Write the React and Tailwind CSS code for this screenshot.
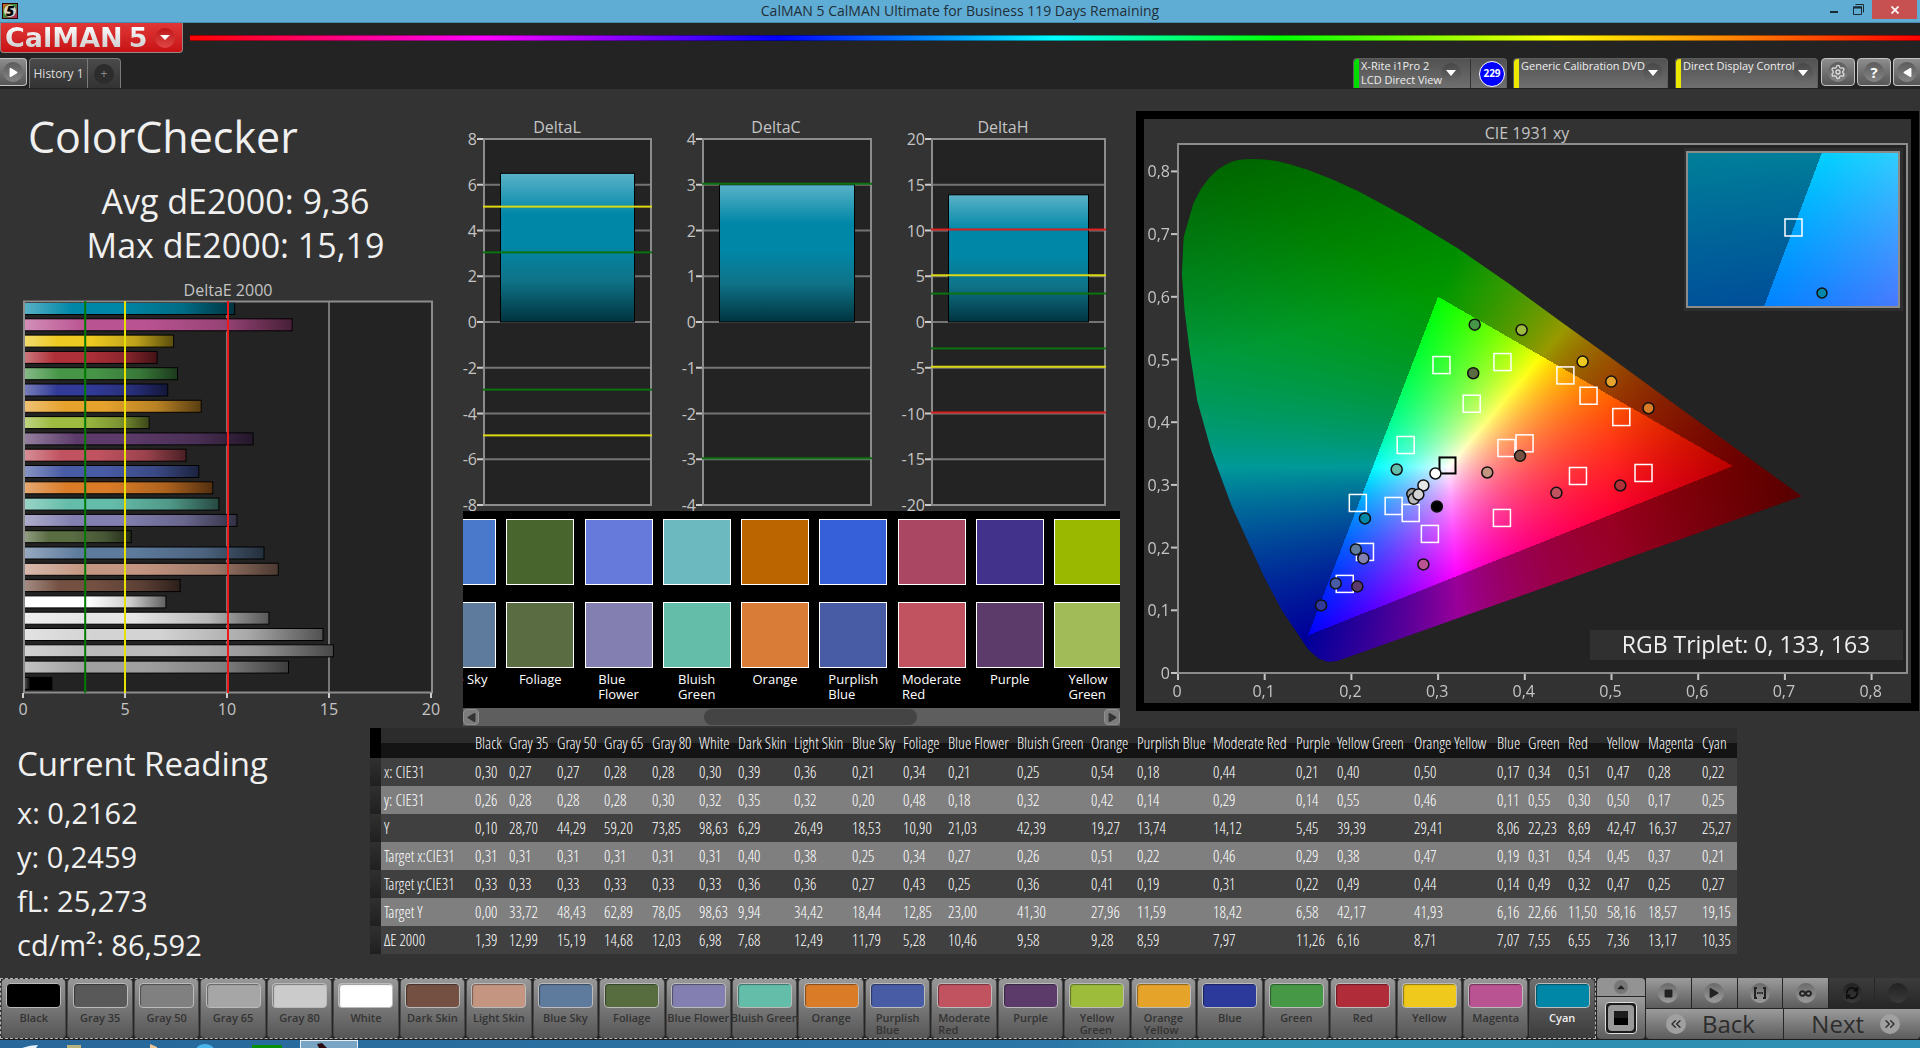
import React, { useEffect, useRef } from "react";
import clsx from "clsx";
import { FaPlay, FaStop, FaCaretUp, FaInfinity } from "react-icons/fa";
import { Settings, RefreshCw, ChevronsLeft, ChevronsRight } from "lucide-react";

// row: x, y, Y, target x, target y, target Y, dE2000
const PATCHES = [
  { name: "Black", color: "#000000", button: "#000000", col: "w-[34px]", row: ["0,30", "0,26", "0,10", "0,31", "0,33", "0,00", "1,39"] },
  { name: "Gray 35", color: "#a0a0a0", button: "#595959", col: "w-[48px]", row: ["0,27", "0,28", "28,70", "0,31", "0,33", "33,72", "12,99"] },
  { name: "Gray 50", color: "#bbbbbb", button: "#808080", col: "w-[47px]", row: ["0,27", "0,28", "44,29", "0,31", "0,33", "48,43", "15,19"] },
  { name: "Gray 65", color: "#d3d3d3", button: "#a6a6a6", col: "w-[48px]", row: ["0,28", "0,28", "59,20", "0,31", "0,33", "62,89", "14,68"] },
  { name: "Gray 80", color: "#e6e6e6", button: "#cbcbcb", col: "w-[47px]", row: ["0,28", "0,30", "73,85", "0,31", "0,33", "78,05", "12,03"] },
  { name: "White", color: "#ffffff", button: "#ffffff", col: "w-[39px]", row: ["0,30", "0,32", "98,63", "0,31", "0,33", "98,63", "6,98"] },
  { name: "Dark Skin", color: "#735042", button: "#735042", col: "w-[56px]", row: ["0,39", "0,35", "6,29", "0,40", "0,36", "9,94", "7,68"] },
  { name: "Light Skin", color: "#c49682", button: "#c49682", col: "w-[58px]", row: ["0,36", "0,32", "26,49", "0,38", "0,36", "34,42", "12,49"] },
  { name: "Blue Sky", color: "#5e7b9d", button: "#5e7b9d", target: "#4a79cb", col: "w-[51px]", row: ["0,21", "0,20", "18,53", "0,25", "0,27", "18,44", "11,79"] },
  { name: "Foliage", color: "#596c42", button: "#576c3f", target: "#48652e", col: "w-[45px]", row: ["0,34", "0,48", "10,90", "0,34", "0,43", "12,85", "5,28"] },
  { name: "Blue Flower", color: "#8380b1", button: "#8380b1", target: "#667adb", col: "w-[69px]", stack: true, row: ["0,21", "0,18", "21,03", "0,27", "0,25", "23,00", "10,46"] },
  { name: "Bluish Green", color: "#64bda9", button: "#64bda9", target: "#6cbabf", col: "w-[74px]", stack: true, row: ["0,25", "0,32", "42,39", "0,26", "0,36", "41,30", "9,58"] },
  { name: "Orange", color: "#d97b27", button: "#d97b27", swatch: "#d87c37", target: "#bb6500", col: "w-[46px]", row: ["0,54", "0,42", "19,27", "0,51", "0,41", "27,96", "9,28"] },
  { name: "Purplish Blue", color: "#485ba5", button: "#485ba5", target: "#365fda", col: "w-[76px]", stack: true, wrap: true, row: ["0,18", "0,14", "13,74", "0,22", "0,19", "11,59", "8,59"] },
  { name: "Moderate Red", color: "#c15360", button: "#c15360", target: "#aa4762", col: "w-[83px]", stack: true, wrap: true, row: ["0,44", "0,29", "14,12", "0,46", "0,31", "18,42", "7,97"] },
  { name: "Purple", color: "#5c3b6a", button: "#5c3b6a", target: "#42328b", col: "w-[41px]", row: ["0,21", "0,14", "5,45", "0,29", "0,22", "6,58", "11,26"] },
  { name: "Yellow Green", color: "#9ebc40", button: "#9ebc3b", swatch: "#a1bb58", target: "#9bb800", col: "w-[77px]", stack: true, wrap: true, row: ["0,40", "0,55", "39,39", "0,38", "0,49", "42,17", "6,16"] },
  { name: "Orange Yellow", color: "#e6a22d", button: "#e6a329", col: "w-[83px]", wrap: true, row: ["0,50", "0,46", "29,41", "0,47", "0,44", "41,93", "8,71"] },
  { name: "Blue", color: "#313b97", button: "#2b3a9b", col: "w-[31px]", row: ["0,17", "0,11", "8,06", "0,19", "0,14", "6,16", "7,07"] },
  { name: "Green", color: "#479648", button: "#469746", col: "w-[40px]", row: ["0,34", "0,55", "22,23", "0,31", "0,49", "22,66", "7,55"] },
  { name: "Red", color: "#b03039", button: "#b02c38", col: "w-[39px]", row: ["0,51", "0,30", "8,69", "0,54", "0,32", "11,50", "6,55"] },
  { name: "Yellow", color: "#edc921", button: "#efc91b", col: "w-[41px]", row: ["0,47", "0,50", "42,47", "0,45", "0,47", "58,16", "7,36"] },
  { name: "Magenta", color: "#ba5392", button: "#ba5392", col: "w-[54px]", row: ["0,28", "0,17", "16,37", "0,37", "0,25", "18,57", "13,17"] },
  { name: "Cyan", color: "#0087a7", button: "#0087a7", col: "w-[38px]", row: ["0,22", "0,25", "25,27", "0,21", "0,27", "19,15", "10,35"] },
];

const ROW_LABELS = ["x: CIE31", "y: CIE31", "Y", "Target x:CIE31", "Target y:CIE31", "Target Y", "ΔE 2000"];

const TARGETS = [
  [0.3045, 0.4919], [0.3748, 0.4967], [0.4474, 0.4754], [0.4741, 0.443], [0.3393, 0.4303],
  [0.5119, 0.409], [0.2632, 0.3644], [0.3794, 0.3596], [0.4003, 0.3671], [0.4619, 0.315],
  [0.5375, 0.3198], [0.208, 0.272], [0.2493, 0.2672], [0.269, 0.256], [0.2911, 0.2226],
  [0.3742, 0.2481], [0.2162, 0.1939], [0.1929, 0.1429],
];

const READINGS = [
  [0.3428, 0.5572, "#479648"], [0.3969, 0.5487, "#9ebc40"], [0.4672, 0.4983, "#edc921"],
  [0.5003, 0.4664, "#e6a22d"], [0.3411, 0.4797, "#596c42"], [0.5433, 0.4239, "#d97b27"],
  [0.2528, 0.3262, "#64bda9"], [0.2975, 0.3198, "#ffffff"], [0.3573, 0.3214, "#c49682"],
  [0.3951, 0.3479, "#735042"], [0.2836, 0.3007, "#e6e6e6"], [0.2708, 0.2869, "#a0a0a0"],
  [0.2725, 0.2794, "#bbbbbb"], [0.2778, 0.2863, "#d3d3d3"], [0.2992, 0.2672, "#000000"],
  [0.437, 0.289, "#c15360"], [0.5107, 0.3007, "#b03039"], [0.2162, 0.2481, "#0087a7"],
  [0.2057, 0.1987, "#5e7b9d"], [0.2144, 0.1843, "#8380b1"], [0.2836, 0.1748, "#ba5392"],
  [0.1825, 0.1445, "#485ba5"], [0.2074, 0.1397, "#5c3b6a"], [0.1656, 0.1094, "#313b97"],
];

const LOCUS = [
  [0.1836, 0.0191], [0.173, 0.0175], [0.162, 0.023], [0.15, 0.038], [0.1197, 0.0999], [0.0994, 0.153],
  [0.0616, 0.267], [0.0383, 0.355], [0.0221, 0.4345], [0.0139, 0.509], [0.0076, 0.578],
  [0.0045, 0.636], [0.0065, 0.695], [0.0175, 0.748], [0.026, 0.771], [0.036, 0.79], [0.046, 0.803],
  [0.0558, 0.8115], [0.063, 0.8158], [0.0703, 0.8187], [0.0848, 0.8199], [0.1, 0.819],
  [0.1139, 0.8165], [0.13, 0.811], [0.1487, 0.803], [0.177, 0.788], [0.2069, 0.769],
  [0.265, 0.726], [0.323, 0.677], [0.381, 0.6215], [0.439, 0.563], [0.4974, 0.5046],
  [0.5828, 0.4186], [0.7195, 0.282],
];

const PANEL_GRADIENT = "bg-linear-to-b from-[#9c9c9c] to-[#5c5c5c]";

function toNumber(text) {
  return parseFloat(text.replace(",", "."));
}

function insideGamut(x, y) {
  const side = (ax, ay, bx, by) => (bx - ax) * (y - ay) - (by - ay) * (x - ax);
  return (
    side(0.15, 0.06, 0.64, 0.33) >= 0 &&
    side(0.64, 0.33, 0.3, 0.6) >= 0 &&
    side(0.3, 0.6, 0.15, 0.06) >= 0
  );
}

// Brightest displayable colour for a chromaticity, dimmed outside Rec.709
function chromaColor(x, y) {
  const X = x / y;
  const Z = (1 - x - y) / y;
  const r = Math.max(0, 3.2406 * X - 1.5372 - 0.4986 * Z);
  const g = Math.max(0, -0.9689 * X + 1.8758 + 0.0415 * Z);
  const b = Math.max(0, 0.0557 * X - 0.204 + 1.057 * Z);
  const max = Math.max(r, g, b);
  const greenFall = Math.max(0, (y - 0.6) * 1.1 + (0.3 - x) * 0.4);
  const redFall = Math.max(0, (x - 0.5) * 2);
  const level = (255 * (1 - greenFall - redFall) * (insideGamut(x, y) ? 1 : 0.6)) / max;
  return [r * level, g * level, b * level];
}

function ChromaCanvas({ width, height, xMin, xMax, yMin, yMax, outline }) {
  const ref = useRef(null);

  useEffect(() => {
    const ctx = ref.current.getContext("2d");
    const image = ctx.createImageData(width, height);
    for (let j = 0; j < height; j++) {
      for (let i = 0; i < width; i++) {
        const x = xMin + ((i + 0.5) / width) * (xMax - xMin);
        const y = yMax - ((j + 0.5) / height) * (yMax - yMin);
        const [r, g, b] = chromaColor(x, Math.max(y, 0.001));
        image.data.set([r, g, b, 255], (j * width + i) * 4);
      }
    }
    ctx.putImageData(image, 0, 0);

    if (outline) {
      ctx.globalCompositeOperation = "destination-in";
      ctx.beginPath();
      outline.forEach(([x, y]) => {
        ctx.lineTo(((x - xMin) / (xMax - xMin)) * width, ((yMax - y) / (yMax - yMin)) * height);
      });
      ctx.closePath();
      ctx.fill();
      ctx.globalCompositeOperation = "source-over";
    }
  }, [width, height, xMin, xMax, yMin, yMax, outline]);

  return <canvas ref={ref} width={width} height={height} className="block" />;
}

function TitleBar() {
  return (
    <div className="flex h-[23px] items-center border-b border-[#4a8cae] bg-[#5facd4] text-[#1f2f38]">
      <div className="w-24 pl-0.5">
        <svg className="size-4" viewBox="0 0 16 16">
          <defs>
            <linearGradient id="appIcon" x1="0" y1="0" x2="1" y2="1">
              <stop offset="0" stopColor="#e8541c" />
              <stop offset="0.4" stopColor="#2f9a3a" />
              <stop offset="1" stopColor="#c8175a" />
            </linearGradient>
          </defs>
          <rect width="16" height="16" fill="#300" />
          <rect x="1" y="1" width="14" height="14" fill="url(#appIcon)" />
          <circle cx="8" cy="8" r="6" fill="#d8d4c4" />
          <text x="8" y="13" textAnchor="middle" fontSize="14" fontWeight="800" fontStyle="italic" fill="#000">5</text>
        </svg>
      </div>
      <div className="flex-1 text-center text-[14px] leading-[22px]">
        CalMAN 5 CalMAN Ultimate for Business 119 Days Remaining
      </div>
      <div className="flex h-full w-24 items-start justify-end">
        <button aria-label="Minimize" className="flex h-[19px] w-5 items-end justify-center pb-1.5">
          <span className="h-[2px] w-2 bg-[#1b2a33]" />
        </button>
        <button aria-label="Restore" className="flex h-[19px] w-7 items-center justify-center">
          <svg className="size-[11px]" viewBox="0 0 11 11" fill="none" stroke="#1b2a33">
            <path d="M2.500 0.500H10.500V8.500" />
            <path d="M0.500 3H8.500V10.500H0.500Z" />
            <path d="M0 3.500H9" strokeWidth="2" />
          </svg>
        </button>
        <button aria-label="Close" className="mr-[3px] flex h-[19px] w-[45px] items-center justify-center bg-[#c75050]">
          <svg className="size-2" viewBox="0 0 8 8" stroke="#fff" strokeWidth="1.700">
            <path d="M0.500 0.500L7.500 7.500M7.500 0.500L0.500 7.500" />
          </svg>
        </button>
      </div>
    </div>
  );
}

function RoundCaret() {
  return (
    <span className="flex size-5 shrink-0 items-center justify-center rounded-full bg-linear-to-b from-[#474747] to-[#6a6a6a]">
      <svg className="h-[6px] w-[10px]" viewBox="0 0 10 6" fill="#fff">
        <path d="M0 0H10L5 6Z" />
      </svg>
    </span>
  );
}

function DeviceTab({ bar, lines, className, children }) {
  return (
    <div className={clsx("flex h-[30px] rounded-t border border-b-0 border-[#5e5e5e] bg-linear-to-b from-[#525252] to-[#6f6f6f]", className)}>
      <button className="flex min-w-0 flex-1 text-left text-[11px] leading-[14px] text-[#eee]">
        <span className={clsx("h-full w-[5px] shrink-0 rounded-tl", bar)} />
        <span className="min-w-0 flex-1 pl-[2px] whitespace-nowrap">
          {lines.map((line) => (
            <span key={line} className="block">{line}</span>
          ))}
        </span>
        <span className="mt-1 mr-1 shrink-0">
          <RoundCaret />
        </span>
      </button>
      {children}
    </div>
  );
}

function SquareButton({ label, className, children }) {
  return (
    <button
      aria-label={label}
      className={clsx("flex h-7 items-center justify-center border border-[#c4c4c4] bg-linear-to-b from-[#8e8e8e] to-[#565656]", className)}
    >
      <span className="flex size-5 items-center justify-center rounded-full bg-linear-to-b from-[#5c5c5c] to-[#858585] text-white">
        {children}
      </span>
    </button>
  );
}

function Header() {
  return (
    <header className="bg-[#232323]">
      <div className="flex h-[35px] items-start gap-[7px]">
        <button className="flex h-[30px] w-[183px] shrink-0 items-center rounded-b border border-t-0 border-[#9a8585] bg-linear-to-b from-[#e03636] to-[#c80f14] pl-1">
          <span className="bg-linear-to-b from-white to-[#c8c8c8] bg-clip-text font-['DejaVu_Sans'] text-[27px] leading-[26px] font-bold text-transparent">
            CalMAN
          </span>
          <span className="ml-1.5 bg-linear-to-b from-white to-[#c8c8c8] bg-clip-text font-['DejaVu_Sans'] text-[27px] leading-[26px] font-bold text-transparent">
            5
          </span>
          <span className="ml-2 flex size-5 items-center justify-center rounded-full bg-linear-to-b from-[#bd1318] to-[#e04444]">
            <svg className="h-[5px] w-[10px]" viewBox="0 0 10 5" fill="#fff">
              <path d="M0 0H10L5 5Z" />
            </svg>
          </span>
        </button>
        <div className="mt-3 h-[6px] flex-1 border-y border-black/40 bg-[linear-gradient(to_right,#f00,#f0f_17%,#00f_34%,#0ff_50%,#0f0_63%,#ff0_79%,#f00)]" />
      </div>
      <div className="flex h-[31px] items-start">
        <SquareButton label="Show panel" className="w-[27px] rounded-r border-l-0">
          <FaPlay className="text-[9px]" />
        </SquareButton>
        <div className="ml-0.5 flex h-[30px] rounded-t border border-b-0 border-[#7a7a7a] bg-linear-to-b from-[#4a4a4a] to-[#333]">
          <button className="w-[58px] border-r border-[#7a7a7a] text-[12px] text-[#ddd]">History 1</button>
          <button aria-label="Add history" className="flex w-8 items-center justify-center">
            <span className="flex size-5 items-center justify-center rounded-full bg-[#2c2c2c] text-[12px] leading-none text-[#888]">+</span>
          </button>
        </div>
        <div className="ml-auto flex items-start">
          <DeviceTab bar="bg-[#00dc00]" lines={["X-Rite i1Pro 2", "LCD Direct View"]} className="mr-1.5 w-[154px]">
            <span className="ml-[5px] flex w-9 shrink-0 items-center justify-end border-l border-[#333] pr-px">
              <span className="flex size-[26px] items-center justify-center rounded-full border border-white bg-[#0000ff] text-[10px] font-bold text-white">
                229
              </span>
            </span>
          </DeviceTab>
          <DeviceTab bar="bg-[#ece800]" lines={["Generic Calibration DVD"]} className="mr-[7px] w-[155px]" />
          <DeviceTab bar="bg-[#ece800]" lines={["Direct Display Control"]} className="mr-[3px] w-[143px]" />
          <SquareButton label="Settings" className="mr-0.5 w-[34px] rounded">
            <Settings className="size-4 text-[#ddd]" />
          </SquareButton>
          <SquareButton label="Help" className="mr-0.5 w-[34px] rounded">
            <span className="text-[15px] leading-none font-bold">?</span>
          </SquareButton>
          <SquareButton label="Collapse" className="w-[27px] rounded-l border-r-0">
            <FaPlay className="rotate-180 text-[9px]" />
          </SquareButton>
        </div>
      </div>
    </header>
  );
}

function DeltaEChart() {
  const xs = (v) => 23 + v * 20.4;
  return (
    <svg className="block w-full text-[16px]" viewBox="0 0 463 461">
      <defs>
        <linearGradient id="shadeH" x1="0" x2="1" y1="0" y2="0">
          <stop offset="0" stopColor="#fff" stopOpacity="0.350" />
          <stop offset="0.230" stopColor="#fff" stopOpacity="0" />
          <stop offset="0.450" stopColor="#000" stopOpacity="0" />
          <stop offset="0.750" stopColor="#000" stopOpacity="0.200" />
          <stop offset="1" stopColor="#000" stopOpacity="0.620" />
        </linearGradient>
      </defs>
      <text x="228" y="29" textAnchor="middle" fill="#c4c4c4">DeltaE 2000</text>
      <rect x="23" y="34" width="409" height="392" fill="#232323" />
      {[5, 10, 15].map((v) => (
        <rect key={v} x={xs(v) - 1} y="34" width="2" height="392" fill="#777" />
      ))}
      {[...PATCHES].reverse().map((p, i) => {
        const bar = { x: 24, y: 35.5 + i * 16.3, width: toNumber(p.row[6]) * 20.4 - 0.5, height: 12 };
        return (
          <g key={p.name}>
            <rect {...bar} fill={p.color} />
            <rect {...bar} fill="url(#shadeH)" stroke="#000" />
          </g>
        );
      })}
      <rect x="24" y="34.500" width="408" height="391" fill="none" stroke="#8c8c8c" strokeWidth="2" />
      <rect x={xs(3)} y="34" width="2" height="392" fill="#007a00" />
      <rect x={xs(5) - 1} y="34" width="2" height="392" fill="#e6e000" />
      <rect x={xs(10)} y="34" width="2" height="392" fill="#f01818" />
      {[0, 5, 10, 15, 20].map((v) => (
        <g key={v}>
          <rect x={xs(v) - 1} y="426" width="2" height="5" fill="#ccc" />
          <text x={xs(v)} y="448" textAnchor="middle" fill="#c4c4c4">{v}</text>
        </g>
      ))}
    </svg>
  );
}

function DeltaChart({ title, titleX, width, left, right, max, step, value, limits }) {
  const ys = (v) => 233 - (v / max) * 183;
  const ticks = [];
  for (let v = max; v >= -max; v -= step) ticks.push(v);
  const inset = 17.5;
  const bar = { x: left + inset, y: ys(value), width: right - left - inset * 2, height: 233 - ys(value) };
  const gradientId = `shade${title}`;

  return (
    <svg className="block w-full text-[16px]" viewBox={`0 0 ${width} 422`}>
      <defs>
        <linearGradient id={gradientId} x1="0" x2="0" y1="0" y2="1">
          <stop offset="0" stopColor="#5ab2c8" />
          <stop offset="0.280" stopColor="#0087a7" />
          <stop offset="0.480" stopColor="#0087a7" />
          <stop offset="0.720" stopColor="#0f7388" />
          <stop offset="1" stopColor="#00333f" />
        </linearGradient>
      </defs>
      <text x={titleX} y="44" textAnchor="middle" fill="#c4c4c4">{title}</text>
      <rect x={left} y="49" width={right - left} height="367" fill="#232323" />
      {ticks.map((v) => (
        <g key={v}>
          <rect x={left} y={ys(v) - 1} width={right - left} height="2" fill="#747474" />
          <rect x={left - 6} y={ys(v) - 1} width="6" height="2" fill="#ccc" />
          <text x={left - 6} y={ys(v) + 6} textAnchor="end" fill="#c4c4c4">{v}</text>
        </g>
      ))}
      <rect x={left + 1} y="50" width={right - left - 2} height="366" fill="none" stroke="#8c8c8c" strokeWidth="2" />
      <rect {...bar} fill={`url(#${gradientId})`} stroke="#000" />
      {limits.map(([v, color]) => (
        <rect key={v} x={left} y={ys(v) - 2} width={right - left} height="2" fill={color} />
      ))}
    </svg>
  );
}

const GREEN = "#0b7310";
const YELLOW = "#dcd814";
const RED = "#d81e1e";

function PatchStrip() {
  return (
    <div>
      <div className="flex h-[197px] justify-center overflow-hidden bg-black pt-2">
        <div className="-mr-0.5 -ml-[35px] flex flex-1 justify-between">
          {PATCHES.slice(8, 17).map((p) => (
            <div key={p.name} className="flex w-[68px] shrink-0 flex-col items-center">
              <div className="h-[66px] w-full border border-white" style={{ background: p.target }} />
              <div className="mt-[17px] h-[66px] w-full border border-white" style={{ background: p.swatch || p.color }} />
              <div className="mt-1 text-[13px] leading-[15px] whitespace-pre text-white">
                {p.stack ? p.name.replace(" ", "\n") : p.name}
              </div>
            </div>
          ))}
        </div>
      </div>
      <div className="flex h-[18px] items-center justify-between bg-[#5e5e5e]">
        <button aria-label="Scroll left" className="flex h-4 w-4 items-center justify-center rounded border border-[#909090] bg-[#7c7c7c]">
          <FaPlay className="rotate-180 text-[9px] text-[#333]" />
        </button>
        <div className="flex flex-1">
          <div className="ml-[36%] h-4 w-[34%] rounded-lg bg-[#444]" />
        </div>
        <button aria-label="Scroll right" className="flex h-4 w-4 items-center justify-center rounded border border-[#909090] bg-[#7c7c7c]">
          <FaPlay className="text-[9px] text-[#333]" />
        </button>
      </div>
    </div>
  );
}

function CieChart() {
  const xs = (v) => 34 + v * 867;
  const ys = (v) => 554 - v * 627;
  const ticks = [0, 1, 2, 3, 4, 5, 6, 7, 8];
  const tickLabel = (t) => (t === 0 ? "0" : `0,${t}`);

  return (
    <svg className="block w-full bg-[#323232] text-[16px]" viewBox="0 0 767 584">
      <text x="383" y="20" textAnchor="middle" fill="#c4c4c4">CIE 1931 xy</text>
      <rect x="34" y="25" width="729" height="529" fill="#232323" />
      <foreignObject x="34" y="25" width="729" height="529">
        <ChromaCanvas width={729} height={529} xMin={0} xMax={729 / 867} yMin={0} yMax={529 / 627} outline={LOCUS} />
      </foreignObject>
      <rect x="34" y="25" width="729" height="529" fill="none" stroke="#8c8c8c" strokeWidth="2" />
      {ticks.map((t) => (
        <g key={t} fill="#c4c4c4">
          <rect x={xs(t / 10) - 1} y="555" width="2" height="6" />
          <text x={xs(t / 10) - 1} y="578" textAnchor="middle">{tickLabel(t)}</text>
          <rect x="27" y={ys(t / 10) - 1} width="6" height="2" />
          <text x="26" y={ys(t / 10) + 6} textAnchor="end">{tickLabel(t)}</text>
        </g>
      ))}

      {TARGETS.map(([x, y]) => (
        <rect key={`${x}-${y}`} x={xs(x) - 9} y={ys(y) - 8} width="17" height="17" fill="none" stroke="#fff" strokeWidth="1.500" />
      ))}
      <rect x={xs(0.312) - 9} y={ys(0.331) - 8} width="16" height="16" fill="none" stroke="#000" strokeWidth="2" />
      {READINGS.map(([x, y, color]) => (
        <circle key={color} cx={xs(x) - 0.5} cy={ys(y) + 1} r="5.500" fill={color} stroke="#111" strokeWidth="1.500" />
      ))}

      <rect x="540" y="29" width="219" height="163" fill="#2e2e2e" />
      <foreignObject x="543" y="33" width="212" height="155">
        <ChromaCanvas width={212} height={155} xMin={0.1783} xMax={0.2395} yMin={0.2418} yMax={0.3023} />
      </foreignObject>
      <rect x="543" y="33" width="212" height="155" fill="none" stroke="#8c8c8c" strokeWidth="2" />
      <rect x="641" y="100" width="17" height="17" fill="none" stroke="#fff" strokeWidth="1.500" />
      <circle cx="678" cy="174" r="5" fill="#0087a7" stroke="#111" strokeWidth="1.500" />

      <rect x="446" y="511" width="313" height="30" fill="#303030" />
      <text x="602" y="534" textAnchor="middle" fill="#f0f0f0" className="text-[23px]">RGB Triplet: 0, 133, 163</text>
    </svg>
  );
}

function ResultsTable() {
  return (
    <table className="table-fixed border-collapse font-['Open_Sans_Condensed_Light','Liberation_Sans_Narrow','Open_Sans',sans-serif] text-[16px] whitespace-nowrap text-white">
      <colgroup>
        <col className="w-[11px]" />
        <col className="w-[91px]" />
        {PATCHES.map((p) => (
          <col key={p.name} className={p.col} />
        ))}
      </colgroup>
      <thead>
        <tr className="h-[30px] bg-[linear-gradient(#2c2c2c_50%,#141414_50%)]">
          <th className="bg-black p-0" />
          <th className="p-0" />
          {PATCHES.map((p) => (
            <th key={p.name} scope="col" className="p-0 pl-[3px] text-left font-normal">{p.name}</th>
          ))}
        </tr>
      </thead>
      <tbody>
        {ROW_LABELS.map((label, i) => (
          <tr key={label} className={clsx("h-7", i % 2 ? "bg-[#7f7f7f]" : "bg-[#404040]")}>
            <td className="bg-linear-to-b from-[#303030] to-[#202020] p-0" />
            <th scope="row" className="p-0 pl-[3px] text-left font-normal">{label}</th>
            {PATCHES.map((p) => (
              <td key={p.name} className="p-0 pl-[3px]">{p.row[i]}</td>
            ))}
          </tr>
        ))}
      </tbody>
    </table>
  );
}

function TransportButton({ label, dark, children }) {
  return (
    <button
      aria-label={label}
      className={clsx("flex h-[30px] flex-1 items-center justify-center", dark ? "bg-linear-to-b from-[#3c3c3c] to-[#262626]" : PANEL_GRADIENT)}
    >
      <span
        className={clsx(
          "flex size-5 items-center justify-center rounded-full text-[#222]",
          dark ? "bg-linear-to-b from-[#222] to-[#3a3a3a]" : "bg-linear-to-b from-[#6a6a6a] to-[#9c9c9c]"
        )}
      >
        {children}
      </span>
    </button>
  );
}

function PatchBar() {
  return (
    <footer className="flex h-[62px] border-b border-[#1c1c1c] bg-[#262626]">
      <div className="flex min-w-0 flex-1 gap-px border border-dashed border-[#b4b4b4]">
        {PATCHES.map((p) => {
          const active = p.name === "Cyan";
          return (
            <button
              key={p.name}
              className={clsx(
                "flex min-w-0 flex-1 flex-col items-center rounded-sm border-x border-[#484848] pt-1 text-[11px] leading-3 font-semibold",
                active ? "bg-linear-to-b from-[#6e6e6e] to-[#3c3c3c] text-[#eee]" : "bg-linear-to-b from-[#989898] to-[#565656] text-[#333]"
              )}
            >
              <span className="h-[25px] w-[55px] rounded border border-[#bbb] shadow-[inset_1px_1px_1px_rgba(0,0,0,0.4)]" style={{ background: p.button }} />
              <span className="mt-1 text-left whitespace-pre">{p.wrap ? p.name.replace(" ", "\n") : p.name}</span>
            </button>
          );
        })}
      </div>
      <div className="mx-px flex w-12 flex-col gap-px">
        <button aria-label="Expand patches" className="flex h-[18px] items-center justify-center rounded-t bg-[#939393]">
          <span className="flex size-[14px] items-center justify-center rounded-full bg-[#777] text-[12px] text-[#222]">
            <FaCaretUp />
          </span>
        </button>
        <button aria-label="Pattern window" className={clsx("flex flex-1 items-center justify-center rounded-b", PANEL_GRADIENT)}>
          <span className="flex size-8 items-center justify-center rounded border border-[#ddd] bg-[#1c1c1c] p-[2px]">
            <span className="flex size-full items-center justify-center rounded-sm bg-[#999]">
              <span className="size-[14px] bg-[linear-gradient(#1c1c1c_50%,#000_50%)]" />
            </span>
          </span>
        </button>
      </div>
      <div className="flex w-[274px] flex-col gap-px">
        <div className="flex gap-px">
          <TransportButton label="Stop"><FaStop className="text-[9px]" /></TransportButton>
          <TransportButton label="Play"><FaPlay className="text-[10px]" /></TransportButton>
          <TransportButton label="Read series">
            <svg className="size-[14px]" viewBox="0 0 14 14" fill="none" stroke="#222" strokeWidth="2">
              <path d="M4 2H2V12H4M10 2H12V12H10" />
              <path d="M4 7H10" strokeDasharray="1.500 0.700" />
            </svg>
          </TransportButton>
          <TransportButton label="Read continuous"><FaInfinity className="text-[13px]" /></TransportButton>
          <TransportButton label="Refresh" dark><RefreshCw className="size-[14px] text-[#0c0c0c]" strokeWidth={3} /></TransportButton>
          <TransportButton label="Record" dark />
        </div>
        <div className="flex h-[30px] gap-px text-[24px] leading-[30px] font-medium text-[#2c2c2c]">
          <button className={clsx("flex flex-1 items-center rounded-bl pl-5", PANEL_GRADIENT)}>
            <span className="mr-4 flex size-5 items-center justify-center rounded-full bg-[#a0a0a0]">
              <ChevronsLeft className="size-4" />
            </span>
            Back
          </button>
          <button className={clsx("flex flex-1 items-center justify-end rounded-br pr-5", PANEL_GRADIENT)}>
            Next
            <span className="ml-4 flex size-5 items-center justify-center rounded-full bg-[#a0a0a0]">
              <ChevronsRight className="size-4" />
            </span>
          </button>
        </div>
      </div>
    </footer>
  );
}

// Only the top edge of the desktop taskbar shows under the window
function Taskbar() {
  return (
    <div className="h-2 overflow-hidden bg-[linear-gradient(to_right,#28679a,#2b76a6_55%,#2f90b2_62%,#2f8fb4)]">
      <svg className="block h-2 w-[400px]" viewBox="0 0 400 8">
        <path d="M22 8Q30 5 38 5L36 8Z" fill="#e8f2f8" />
        <rect x="67" y="5" width="14" height="3" fill="#b9b27c" />
        <path d="M150 4L157 7V8H150Z" fill="#f0c898" />
        <ellipse cx="205" cy="10" rx="9" ry="6" fill="#48b4ea" />
        <rect x="252" y="5" width="30" height="3" fill="#089008" />
        <rect x="300.500" y="0.500" width="57" height="9" fill="#7aa4c4" stroke="#e4eef6" />
        <path d="M317 4L322 3L327 8H319Z" fill="#2a0c10" />
      </svg>
    </div>
  );
}

export default function App() {
  return (
    <div className="min-h-screen bg-[#333] font-['Open_Sans','Noto_Sans',sans-serif] text-[#f0f0f0]">
      <TitleBar />
      <Header />

      <main>
        <div className="grid grid-cols-[463fr_657fr_800fr]">
          <section className="pt-5">
            <h1 className="pl-7 text-[43px] leading-[56px]">ColorChecker</h1>
            <div className="mt-[14px] pl-2 text-center text-[34px] leading-[44px]">
              <p>Avg dE2000: 9,36</p>
              <p>Max dE2000: 15,19</p>
            </div>
            <DeltaEChart />
          </section>

          <section>
            <div className="grid grid-cols-[212fr_219fr_226fr]">
              <DeltaChart
                title="DeltaL" titleX={94} width={212} left={20} right={189} max={8} step={2} value={6.5}
                limits={[[5, YELLOW], [3, GREEN], [-3, GREEN], [-5, YELLOW]]}
              />
              <DeltaChart
                title="DeltaC" titleX={101} width={219} left={27} right={197} max={4} step={1} value={3}
                limits={[[3, GREEN], [-3, GREEN]]}
              />
              <DeltaChart
                title="DeltaH" titleX={109} width={226} left={37} right={212} max={20} step={5} value={13.9}
                limits={[[10, RED], [5, YELLOW], [3, GREEN], [-3, GREEN], [-5, YELLOW], [-10, RED]]}
              />
            </div>
            <PatchStrip />
          </section>

          <section className="mt-[22px] mr-px ml-4 self-start border-8 border-black">
            <CieChart />
          </section>
        </div>

        <div className="flex items-start pb-[11px]">
          <section className="w-[370px] shrink-0 pt-3 pl-[17px] text-[29px] leading-[44px]">
            <h2 className="mb-[3px] text-[33px] leading-[48px]">Current Reading</h2>
            <p>x: 0,2162</p>
            <p>y: 0,2459</p>
            <p>fL: 25,273</p>
            <p>cd/m²: 86,592</p>
          </section>
          <ResultsTable />
        </div>
      </main>

      <PatchBar />
      <Taskbar />
    </div>
  );
}
